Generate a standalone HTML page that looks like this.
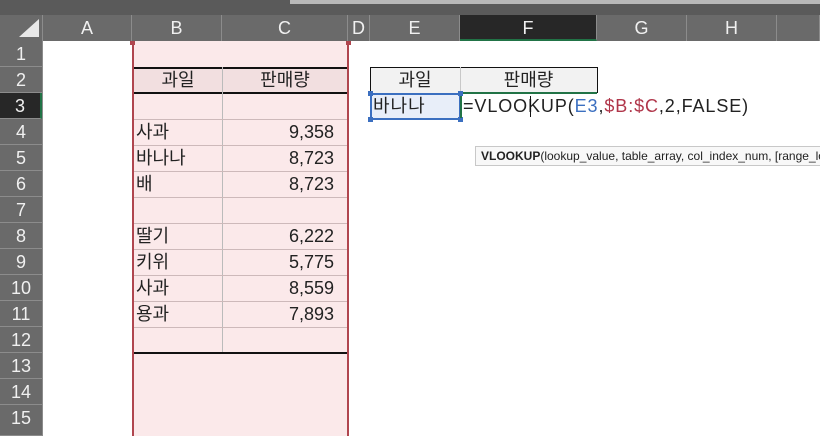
<!DOCTYPE html>
<html><head><meta charset="utf-8"><style>
*{margin:0;padding:0;box-sizing:border-box}
html,body{width:820px;height:436px;overflow:hidden}
body{background:#fff;position:relative;font-family:"Liberation Sans","Noto Sans CJK KR",sans-serif}
.a{position:absolute}
.ch{position:absolute;top:15px;height:26px;color:#f0f0f0;font-size:18px;line-height:26px;text-align:center;border-right:1px solid #8c8c8c}
.rh{position:absolute;left:0;width:42px;height:26px;color:#f0f0f0;font-size:18px;line-height:26px;text-align:center;border-bottom:1px solid #8c8c8c;background:#6a6a6a}
.c{position:absolute;height:26px;font-size:18px;line-height:26px;color:#222;white-space:nowrap}
.hl{position:absolute;left:134px;width:213px;height:1px;background:#cdb9ba}
</style></head><body>
<div class="a" style="left:0;top:0;width:820px;height:15px;background:#5a5a5a"></div>
<div class="a" style="left:290px;top:0;width:530px;height:4px;background:#b8b8b8"></div>
<div class="a" style="left:0;top:15px;width:820px;height:26px;background:#6a6a6a"></div>
<div class="a" style="left:0;top:41px;width:42px;height:395px;background:#6a6a6a"></div>
<div class="a" style="left:42px;top:15px;width:1px;height:421px;background:#8c8c8c"></div>
<svg class="a" style="left:18px;top:18px" width="22" height="20"><polygon points="21,1 21,19 1,19" fill="#e8e8e8"/></svg>
<div class="ch" style="left:43px;width:89px">A</div>
<div class="ch" style="left:132px;width:90px">B</div>
<div class="ch" style="left:222px;width:126px">C</div>
<div class="ch" style="left:348px;width:22px">D</div>
<div class="ch" style="left:370px;width:90px">E</div>
<div class="ch" style="left:460px;width:137px;background:#272727;border-bottom:2px solid #217346">F</div>
<div class="ch" style="left:597px;width:90px">G</div>
<div class="ch" style="left:687px;width:90px">H</div>
<div class="ch" style="left:777px;width:43px"></div>
<div class="rh" style="top:41px">1</div>
<div class="rh" style="top:67px">2</div>
<div class="rh" style="top:93px;background:#272727;border-right:2px solid #217346">3</div>
<div class="rh" style="top:119px">4</div>
<div class="rh" style="top:145px">5</div>
<div class="rh" style="top:171px">6</div>
<div class="rh" style="top:197px">7</div>
<div class="rh" style="top:223px">8</div>
<div class="rh" style="top:249px">9</div>
<div class="rh" style="top:275px">10</div>
<div class="rh" style="top:301px">11</div>
<div class="rh" style="top:327px">12</div>
<div class="rh" style="top:353px">13</div>
<div class="rh" style="top:379px">14</div>
<div class="rh" style="top:405px;height:31px">15</div>
<div class="a" style="left:132px;top:41px;width:217px;height:395px;background:#fbe9ea;border-left:2px solid #b0464f;border-right:2px solid #b0464f"></div>
<div class="a" style="left:130px;top:41px;width:5px;height:4px;background:#b0464f"></div>
<div class="a" style="left:346px;top:41px;width:5px;height:4px;background:#b0464f"></div>
<div class="a" style="left:134px;top:67px;width:213px;height:26px;background:#f2dfe0"></div>
<div class="a" style="left:134px;top:67px;width:213px;height:2px;background:#111"></div>
<div class="a" style="left:134px;top:92px;width:213px;height:2px;background:#111"></div>
<div class="a" style="left:222px;top:67px;width:1px;height:286px;background:#bbb"></div>
<div class="hl" style="top:119px"></div><div class="hl" style="top:145px"></div><div class="hl" style="top:171px"></div><div class="hl" style="top:197px"></div><div class="hl" style="top:223px"></div><div class="hl" style="top:249px"></div><div class="hl" style="top:275px"></div><div class="hl" style="top:301px"></div><div class="hl" style="top:327px"></div>
<div class="a" style="left:134px;top:352px;width:213px;height:2px;background:#111"></div>
<div class="c" style="left:134px;top:67px;width:88px;text-align:center">과일</div>
<div class="c" style="left:222px;top:67px;width:126px;text-align:center">판매량</div>
<div class="c" style="left:136px;top:119px">사과</div><div class="c" style="left:222px;top:119px;width:112px;text-align:right">9,358</div>
<div class="c" style="left:136px;top:145px">바나나</div><div class="c" style="left:222px;top:145px;width:112px;text-align:right">8,723</div>
<div class="c" style="left:136px;top:171px">배</div><div class="c" style="left:222px;top:171px;width:112px;text-align:right">8,723</div>
<div class="c" style="left:136px;top:223px">딸기</div><div class="c" style="left:222px;top:223px;width:112px;text-align:right">6,222</div>
<div class="c" style="left:136px;top:249px">키위</div><div class="c" style="left:222px;top:249px;width:112px;text-align:right">5,775</div>
<div class="c" style="left:136px;top:275px">사과</div><div class="c" style="left:222px;top:275px;width:112px;text-align:right">8,559</div>
<div class="c" style="left:136px;top:301px">용과</div><div class="c" style="left:222px;top:301px;width:112px;text-align:right">7,893</div>
<div class="a" style="left:370px;top:67px;width:228px;height:26px;background:#f2f2f2;border:1px solid #111;border-bottom:none"></div>
<div class="a" style="left:460px;top:67px;width:1px;height:26px;background:#c8c8c8"></div>
<div class="a" style="left:463px;top:92px;width:134px;height:2px;background:#217346"></div>
<div class="c" style="left:370px;top:67px;width:90px;text-align:center">과일</div>
<div class="c" style="left:460px;top:67px;width:137px;text-align:center">판매량</div>
<div class="a" style="left:370px;top:93px;width:91px;height:27px;background:#e8eef9;border:2px solid #3b6fc0"></div>
<div class="a" style="left:368px;top:91px;width:5px;height:5px;background:#3b6fc0"></div>
<div class="a" style="left:368px;top:117px;width:5px;height:5px;background:#3b6fc0"></div>
<div class="a" style="left:458px;top:91px;width:5px;height:5px;background:#3b6fc0"></div>
<div class="a" style="left:458px;top:117px;width:5px;height:5px;background:#3b6fc0"></div>
<div class="a" style="left:460px;top:96px;width:2px;height:22px;background:#217346"></div>
<div class="c" style="left:373px;top:93px;letter-spacing:1px">바나나</div>
<div class="c" style="left:463px;top:93px;letter-spacing:0.9px">=VLOOKUP(<span style="color:#3b6fc0">E3</span>,<span style="color:#b0364a">$B:$C</span>,2,FALSE)</div>
<div class="a" style="left:530px;top:96px;width:1px;height:21px;background:#111"></div>
<div class="a" style="left:475px;top:146px;width:360px;height:20px;background:#f8f8f8;border:1px solid #c8c8c8;font-size:12px;line-height:18px;padding-left:5px;color:#222;white-space:nowrap"><b>VLOOKUP</b>(lookup_value, table_array, col_index_num, [range_lookup])</div>
</body></html>
